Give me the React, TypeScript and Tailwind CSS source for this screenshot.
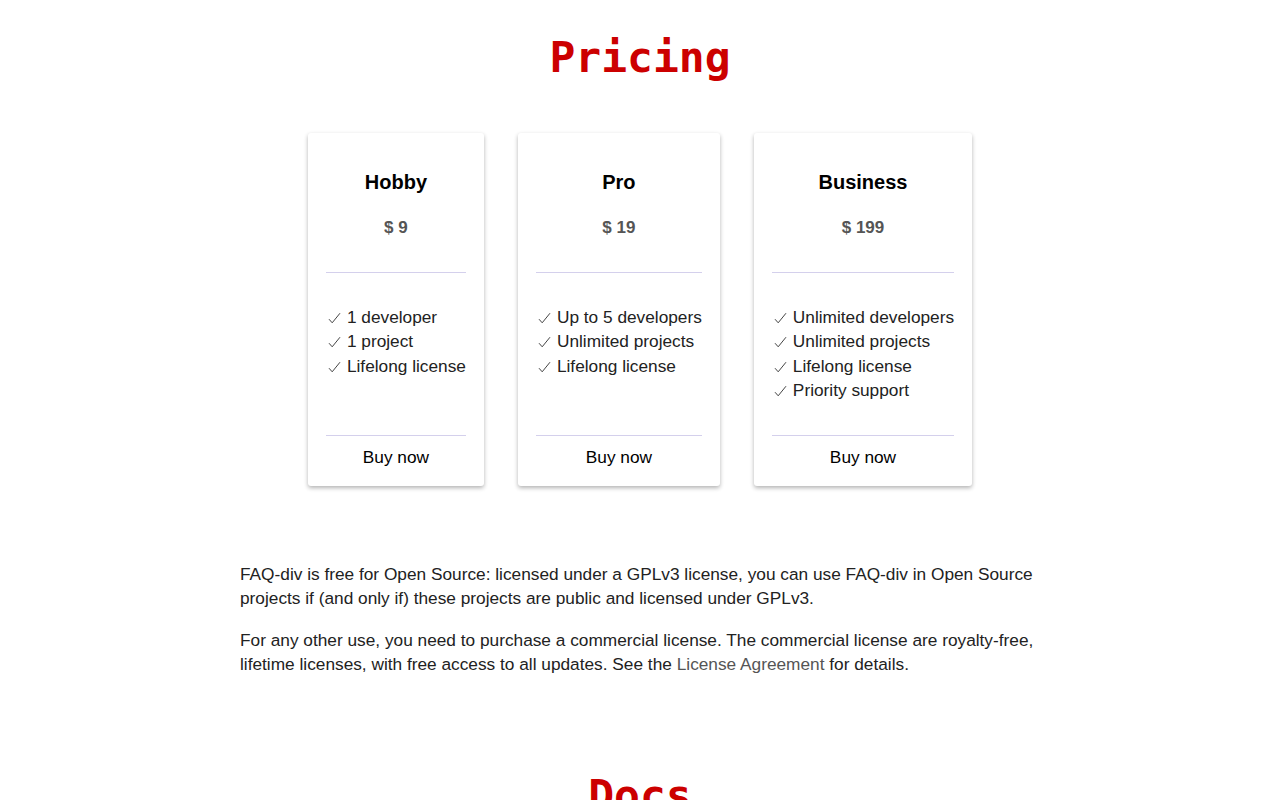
const plans = [
  { name: "Hobby", price: "$ 9", features: ["1 developer", "1 project", "Lifelong license"] },
  { name: "Pro", price: "$ 19", features: ["Up to 5 developers", "Unlimited projects", "Lifelong license"] },
  {
    name: "Business",
    price: "$ 199",
    features: ["Unlimited developers", "Unlimited projects", "Lifelong license", "Priority support"],
  },
];

const Check = () => (
  <svg width="13" height="12" viewBox="0 0 13 12" className="mr-[6px] ml-[2px] inline-block align-[-1px]">
    <path d="M1 7.2 L4.2 10.8 L12 1.2" fill="none" stroke="#444" strokeWidth="1" />
  </svg>
);

const PlanCard = ({ name, price, features }: { name: string; price: string; features: string[] }) => (
  <div className="flex flex-col rounded-[3px] bg-white px-[18px] pt-[18px] pb-[17px] shadow-[0_2px_4px_rgba(0,0,0,0.3)]">
    <h3 className="mt-[19px] text-center text-[20px] leading-[24px] font-bold text-black">{name}</h3>
    <div className="mt-[24px] text-center text-[17px] leading-[20px] font-bold text-[#555]">{price}</div>
    <hr className="mt-[34px] border-0 border-t border-[#d4d0ec]" />
    <ul className="mt-[32px] mb-[32px] flex-1 text-[17.28px] leading-[24.4px] text-[#222]">
      {features.map((f) => (
        <li key={f} className="whitespace-nowrap">
          <Check />
          {f}
        </li>
      ))}
    </ul>
    <hr className="border-0 border-t border-[#d4d0ec]" />
    <button className="mt-[9px] text-center text-[17.28px] leading-[24px] text-black">Buy now</button>
  </div>
);

export default function App() {
  return (
    <div className="min-h-screen bg-white font-['Liberation_Sans',Arial,sans-serif]">
      <h1 className="pt-[31px] text-center font-['DejaVu_Sans_Mono',monospace] text-[43px] leading-[52px] font-bold text-[#cc0000]">
        Pricing
      </h1>
      <div className="mt-[50px] flex justify-center gap-[34px]">
        {plans.map((p) => (
          <PlanCard key={p.name} {...p} />
        ))}
      </div>
      <div className="mx-auto mt-[76px] w-[800px] text-[17.28px] leading-[24px] text-[#222]">
        <p>
          FAQ-div is free for Open Source: licensed under a GPLv3 license, you can use FAQ-div in Open Source
          projects if (and only if) these projects are public and licensed under GPLv3.
        </p>
        <p className="mt-[18px]">
          For any other use, you need to purchase a commercial license. The commercial license are royalty-free,
          lifetime licenses, with free access to all updates. See the{" "}
          <a href="#" className="text-[#555]">
            License Agreement
          </a>{" "}
          for details.
        </p>
      </div>
      <h2 className="mt-[93px] pb-10 text-center font-['DejaVu_Sans_Mono',monospace] text-[43px] leading-[52px] font-bold text-[#cc0000]">
        Docs
      </h2>
    </div>
  );
}
